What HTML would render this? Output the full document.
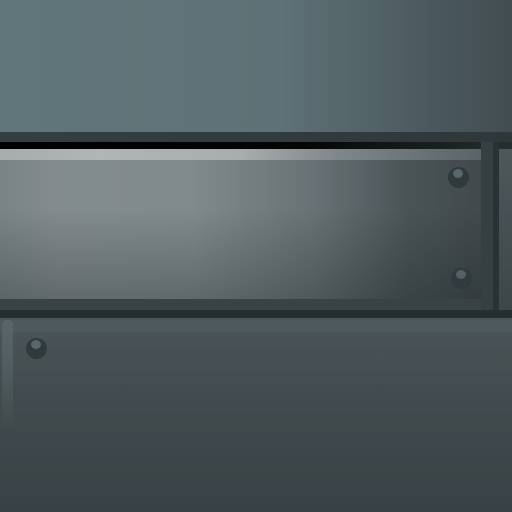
<!DOCTYPE html>
<html><head><style>
html,body{margin:0;padding:0;width:512px;height:512px;overflow:hidden;background:#3a4447}
div{position:absolute}
.rv{width:21px;height:21px;border-radius:50%;background:#30393c}
.rv::after{content:"";position:absolute;left:5px;top:2px;width:10px;height:9px;border-radius:50%;background:#59666a}
</style></head><body>
<div style="left:0;top:0;width:512px;height:132px;background:linear-gradient(90deg,#61767b 0%,#5e7176 55%,#4a585d 85%,#414d51 100%)"></div>
<div style="left:0;top:132px;width:512px;height:10px;background:linear-gradient(90deg,#343e41,#313a3d 70%,#2f3739)"></div>
<div style="left:0;top:142px;width:512px;height:7px;background:linear-gradient(90deg,#000 0%,#050606 60%,#25302f 100%)"></div>
<div style="left:0;top:149px;width:481px;height:11px;background:linear-gradient(90deg,#a6adad 0%,#b0b5b5 20%,#a8aeae 50%,#7f878a 70%,#5a6467 100%)"></div>
<div style="left:0;top:160px;width:481px;height:139px;background:linear-gradient(90deg,#7a8386 0%,#838b8e 12%,#808a8c 40%,#687275 65%,#4a5356 85%,#41494c 100%)"></div>
<div style="left:0;top:160px;width:481px;height:139px;background:linear-gradient(180deg,rgba(0,0,0,0) 0%,rgba(0,0,0,0) 35%,rgba(20,28,30,.3) 100%)"></div>
<div style="left:481px;top:142px;width:12px;height:168px;background:#363f42"></div>
<div style="left:493px;top:142px;width:6px;height:168px;background:#2a3235"></div>
<div style="left:499px;top:149px;width:13px;height:161px;background:linear-gradient(180deg,#4e585b,#3d4649)"></div>
<div style="left:0;top:299px;width:481px;height:11px;background:#394346"></div>
<div style="left:0;top:310px;width:512px;height:8px;background:#262e31"></div>
<div style="left:0;top:318px;width:512px;height:194px;background:linear-gradient(180deg,#4a5558 0%,#424c4f 40%,#384245 100%)"></div>
<div style="left:0;top:320px;width:512px;height:12px;background:#56626564"></div>
<div style="left:2px;top:320px;width:11px;height:110px;border-radius:5px;background:linear-gradient(180deg,#596669,#45505300)"></div>
<div class="rv" style="left:448px;top:167px"></div>
<div class="rv" style="left:451px;top:268px;opacity:.85"></div>
<div class="rv" style="left:26px;top:338px"></div>
</body></html>
